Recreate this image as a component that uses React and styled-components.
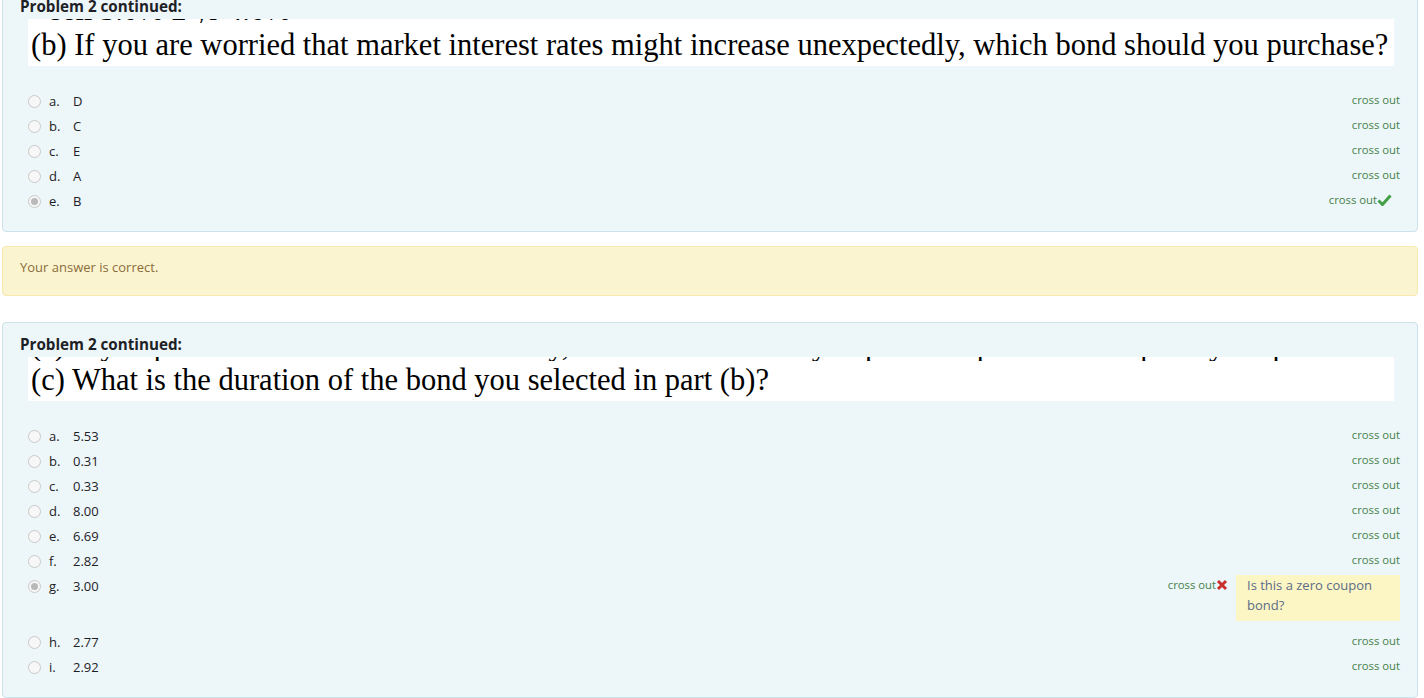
import React from "react";
import styled, { createGlobalStyle } from "styled-components";

const Global = createGlobalStyle`
  html, body { margin: 0; padding: 0; background: #ffffff; }
  body { font-family: "Open Sans", "Noto Sans", sans-serif; color: #1d2125; overflow: hidden; }
`;

const Page = styled.div`
  display: flex;
  flex-direction: column;
  padding: 0 6px 0 2px;
  margin-top: ${(p) => p.$offset}px;
`;

const Panel = styled.div`
  background: #edf6f9;
  border: 1px solid #cbe3ea;
  border-radius: 4px;
  padding: 11px 17px 17px 17px;
  margin-bottom: ${(p) => p.$mb || 0}px;
`;

const Heading = styled.div`
  font-size: 15.2px;
  font-weight: 700;
  line-height: 20px;
  margin-bottom: 3px;
`;

const QImage = styled.div`
  background: #ffffff;
  width: 1366px;
  height: ${(p) => p.$h}px;
  margin-left: 8px;
  overflow: hidden;
  font-family: "Liberation Serif", "Times New Roman", serif;
  color: #000;
`;

const Fragment = styled.div`
  height: 4px;
  overflow: hidden;
  font-size: 30.5px;
  line-height: 32px;
  white-space: nowrap;
  padding-left: ${(p) => p.$pl || 3}px;
`;

const FragmentInner = styled.div`
  transform: translateY(${(p) => p.$dy}px);
`;

const QText = styled.div`
  font-size: 30.5px;
  line-height: 34px;
  padding-left: 3px;
  white-space: nowrap;
  margin-top: ${(p) => p.$mt}px;
`;

const Answers = styled.div`
  display: flex;
  flex-direction: column;
  margin-top: 23px;
  padding-left: 8px;
`;

const Row = styled.div`
  display: flex;
  align-items: flex-start;
  min-height: 25px;
`;

const Radio = styled.span`
  width: 13px;
  height: 13px;
  box-sizing: border-box;
  border-radius: 50%;
  border: 1px solid #c9c9c9;
  background: #f7f7f7;
  margin-top: 6px;
  margin-right: 8px;
  flex: none;
  display: flex;
  align-items: center;
  justify-content: center;
  &::after {
    content: "";
    width: 7px;
    height: 7px;
    border-radius: 50%;
    background: ${(p) => (p.$checked ? "#b9b9b9" : "transparent")};
  }
`;

const Letter = styled.span`
  font-size: 13px;
  line-height: 25px;
  width: 24px;
  flex: none;
`;

const Value = styled.span`
  font-size: 13px;
  line-height: 25px;
  flex: 1;
`;

const Right = styled.div`
  display: flex;
  align-items: flex-start;
  gap: 8px;
`;

const CrossOut = styled.span`
  display: inline-flex;
  align-items: center;
  font-size: 11.3px;
  line-height: 22px;
  color: #45814a;
  margin-right: ${(p) => p.$mr || 0}px;
`;

const Feedback = styled.div`
  width: 164px;
  box-sizing: border-box;
  background: #fbf6c4;
  color: #5b6b89;
  font-size: 13px;
  line-height: 20px;
  padding: 0 8px 6px 11px;
  margin-top: 1px;
  margin-bottom: 9px;
`;

const Outcome = styled.div`
  background: #fbf4d0;
  border: 1px solid #f6e9ae;
  border-radius: 4px;
  height: 50px;
  box-sizing: border-box;
  padding: 10px 17px 0 17px;
  font-size: 13px;
  line-height: 20px;
  color: #8a6d3b;
  margin-bottom: 26px;
`;

const Check = () => (
  <svg width="15" height="12" viewBox="0 0 15 12">
    <path d="M1.5 6.5 L5.5 10.5 L13.5 1.5" fill="none" stroke="#43a047" strokeWidth="3" strokeLinejoin="miter" />
  </svg>
);

const Cross = () => (
  <svg width="12" height="12" viewBox="0 0 12 12">
    <path d="M2 2 L10 10 M10 2 L2 10" fill="none" stroke="#c9302c" strokeWidth="3" />
  </svg>
);

const Option = ({ letter, value, checked, mark, feedback }) => (
  <Row>
    <Radio $checked={checked} />
    <Letter>{letter}</Letter>
    <Value>{value}</Value>
    <Right>
      <CrossOut $mr={mark === "check" ? 8 : 0}>
        cross out
        {mark === "check" && <Check />}
        {mark === "cross" && <Cross />}
      </CrossOut>
      {feedback && <Feedback>{feedback}</Feedback>}
    </Right>
  </Row>
);

const q1 = [
  ["a.", "D"],
  ["b.", "C"],
  ["c.", "E"],
  ["d.", "A"],
  ["e.", "B", true, "check"],
];

const q2 = [
  ["a.", "5.53"],
  ["b.", "0.31"],
  ["c.", "0.33"],
  ["d.", "8.00"],
  ["e.", "6.69"],
  ["f.", "2.82"],
  ["g.", "3.00", true, "cross", "Is this a zero coupon bond?"],
  ["h.", "2.77"],
  ["i.", "2.92"],
];

export default function App() {
  return (
    <>
      <Global />
      <Page $offset={-16}>
        <Panel $mb={14}>
          <Heading>Problem 2 continued:</Heading>
          <QImage $h={47}>
            <Fragment $pl={22}>
              <FragmentInner $dy={-25}>sell 3.0% 2 yr 4.0%</FragmentInner>
            </Fragment>
            <QText $mt={5}>
              (b) If you are worried that market interest rates might increase unexpectedly, which bond should you purchase?
            </QText>
          </QImage>
          <Answers>
            {q1.map(([l, v, c, m]) => (
              <Option key={l} letter={l} value={v} checked={c} mark={m} />
            ))}
          </Answers>
        </Panel>
        <Outcome>Your answer is correct.</Outcome>
        <Panel>
          <Heading>Problem 2 continued:</Heading>
          <QImage $h={44}>
            <Fragment $pl={3}>
              <FragmentInner $dy={-28}>
                (a) If you plan to hold a bond until maturity, which bond would you prefer to purchase? Explain your pick.
              </FragmentInner>
            </Fragment>
            <QText $mt={2}>(c) What is the duration of the bond you selected in part (b)?</QText>
          </QImage>
          <Answers>
            {q2.map(([l, v, c, m, f]) => (
              <Option key={l} letter={l} value={v} checked={c} mark={m} feedback={f} />
            ))}
          </Answers>
        </Panel>
      </Page>
    </>
  );
}
